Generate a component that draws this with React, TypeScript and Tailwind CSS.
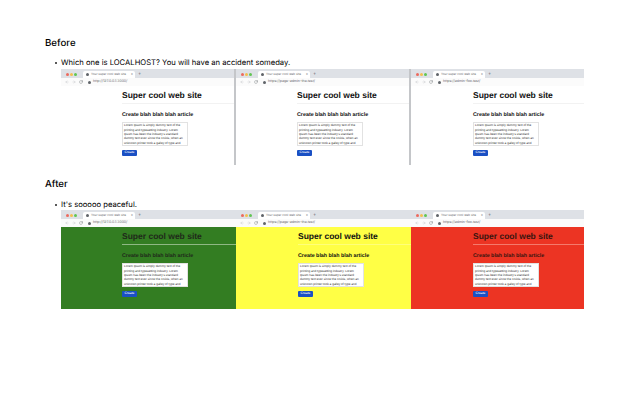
import { ArrowLeft, ArrowRight, RotateCw } from "lucide-react";

const loremLines = [
  "Lorem Ipsum is simply dummy text of the",
  "printing and typesetting industry. Lorem",
  "Ipsum has been the industry's standard",
  "dummy text ever since the 1500s, when an",
  "unknown printer took a galley of type and",
];

interface IBrowserProps {
  url: string;
  width: string;
  bg: string;
  offset: string;
  line: string;
  text: string;
  edge?: boolean;
}

const Browser = ({ url, width, bg, offset, line, text, edge }: IBrowserProps) => {
  return (
    <div className={`${width} ${edge ? "border-r-2 border-r-[#c4c6c9]" : ""} h-full flex flex-col shrink-0 overflow-hidden`}>
      {/* tab strip */}
      <div className="h-[9px] bg-[#dee1e6] flex items-end pl-[5px] shrink-0">
        <div className="flex gap-[1px] mb-[2.5px]">
          <span className="w-[3px] h-[3px] rounded-full bg-[#ec6a5e]" />
          <span className="w-[3px] h-[3px] rounded-full bg-[#f4bf4f]" />
          <span className="w-[3px] h-[3px] rounded-full bg-[#61c554]" />
        </div>
        <div className="ml-[6px] w-[52px] h-[7px] bg-white rounded-t-[2px] flex items-center pl-[3px] pr-[2px] gap-[2px]">
          <span className="w-[3px] h-[3px] rounded-full bg-[#5f6368]" />
          <span className="text-[3px] leading-none text-[#5f6368] whitespace-nowrap flex-1">Your super cool web site</span>
          <span className="text-[3.5px] leading-none text-[#5f6368]">×</span>
        </div>
        <span className="ml-[3px] mb-[1px] text-[5px] leading-none text-[#5f6368]">+</span>
      </div>
      {/* address bar */}
      <div className="h-[8px] bg-[#fbfbfb] flex items-center pl-[4px] gap-[3px] shrink-0">
        <ArrowLeft size={4} strokeWidth={2} className="text-[#b5b8bc]" />
        <ArrowRight size={4} strokeWidth={2} className="text-[#b5b8bc]" />
        <RotateCw size={4} strokeWidth={2} className="text-[#5f6368]" />
        <div className="ml-[2px] flex items-center gap-[2px]">
          <span className="w-[3px] h-[3px] rounded-full bg-[#5f6368]" />
          <span className="text-[3.5px] leading-none text-[#5f6368] whitespace-nowrap">{url}</span>
        </div>
      </div>
      {/* page */}
      <div className={`${bg} ${text} flex-1 min-h-0 ${offset} font-['Liberation_Sans',sans-serif]`}>
        <div className={`text-[8.5px] leading-none font-bold pt-[5px] h-[18px] whitespace-nowrap border-b ${line}`}>
          Super cool web site
        </div>
        <div className="mt-[9px] h-[5.6px] text-[5.35px] leading-none font-bold whitespace-nowrap">
          Create blah blah blah article
        </div>
        <div className="mt-[3px] w-[66px] h-[24.5px] bg-white border border-[#e2e2e2] pl-[1px] pt-[0.5px] text-[3.1px] leading-[4.4px] text-[#333]">
          {loremLines.map((l) => (
            <div key={l} className="whitespace-nowrap">{l}</div>
          ))}
        </div>
        <div className="mt-[4px] w-[15px] h-[6px] bg-[#1a50c4] rounded-[1px] flex items-center justify-center text-[3.3px] leading-none text-white">
          Create
        </div>
      </div>
    </div>
  );
};

const Bullet = ({ label }: { label: string }) => (
  <div className="pl-[10px] flex items-center gap-[4px]">
    <span className="w-[2px] h-[2px] rounded-full bg-[#222] shrink-0" />
    <span className="text-[7.65px] leading-[10px] whitespace-nowrap">{label}</span>
  </div>
);

const App = () => {
  return (
    <div className="w-[640px] h-[400px] bg-white overflow-hidden font-['Inter',sans-serif] text-black pl-[45px] pt-[38px] [text-rendering:geometricPrecision]">
      <h2 className="text-[9.7px] leading-[12px] font-medium">Before</h2>
      <div className="mt-[8px]">
        <Bullet label="Which one is LOCALHOST? You will have an accident someday." />
      </div>
      <div className="mt-[1px] ml-[16px] h-[96px] flex">
        <Browser url="http://127.0.0.1:3000/" width="w-[175px]" bg="bg-white" text="text-[#111]" line="border-b-[#f2f2f2]" offset="pl-[61px]" edge />
        <Browser url="https://page-admin-the.test/" width="w-[175px]" bg="bg-white" text="text-[#111]" line="border-b-[#f2f2f2]" offset="pl-[61px]" edge />
        <Browser url="https://admin-foo.test/" width="w-[173px]" bg="bg-white" text="text-[#111]" line="border-b-[#f2f2f2]" offset="pl-[62px]" />
      </div>

      <h2 className="mt-[14px] text-[9.7px] leading-[12px] font-medium">After</h2>
      <div className="mt-[9px]">
        <Bullet label="It's sooooo peaceful." />
      </div>
      <div className="ml-[16px] h-[99px] flex">
        <Browser url="http://127.0.0.1:3000/" width="w-[175px]" bg="bg-[#337d22]" text="text-[#1f2a1a]" line="border-b-[#8fb884]" offset="pl-[61px]" />
        <Browser url="https://page-admin-the.test/" width="w-[175px]" bg="bg-[#ffff45]" text="text-[#111]" line="border-b-[#ffff7a]" offset="pl-[62px]" />
        <Browser url="https://admin-foo.test/" width="w-[173px]" bg="bg-[#ec3423]" text="text-[#3a1410]" line="border-b-[#f47a6c]" offset="pl-[62px]" />
      </div>
    </div>
  );
};

export default App;
